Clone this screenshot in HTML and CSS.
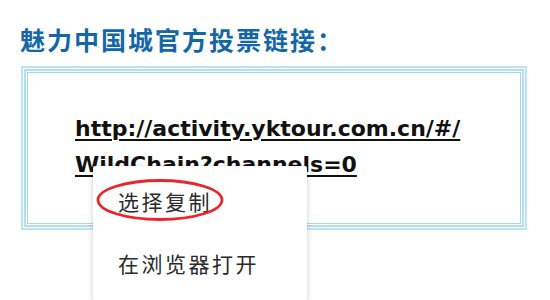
FILE: index.html
```html
<!DOCTYPE html>
<html lang="zh-CN">
<head>
<meta charset="utf-8">
<link rel="stylesheet" href="styles.css">
</head>
<body>
<div class="page">
  <h1 class="title">魅力中国城官方投票链接：</h1>
  <div class="frame">
    <div class="frame-mid">
      <div class="frame-core">
        <a class="url" href="#">http://activity.yktour.com.cn/#/<br>WildChain?channels=0</a>
      </div>
    </div>
  </div>
  <div class="menu">
    <div class="menu-item">选择复制</div>
    <div class="menu-item">在浏览器打开</div>
  </div>
  <svg class="circle" width="130" height="44" viewBox="0 0 130 44">
    <ellipse cx="64" cy="22" rx="62" ry="19.5" fill="none" stroke="#e8262b" stroke-width="2.8"/>
  </svg>
</div>
</body>
</html>
```

FILE: styles.css
```css
html, body {
  margin: 0;
  padding: 0;
  background: #ffffff;
}

.page {
  position: relative;
  width: 550px;
  height: 300px;
  overflow: hidden;
}

.title {
  margin: 0;
  padding: 26px 0 0 20px;
  font-family: "Noto Sans CJK SC", "Noto Sans", sans-serif;
  font-size: 25px;
  line-height: 26px;
  font-weight: 700;
  letter-spacing: 2px;
  color: #1467a7;
}

.frame {
  margin: 14px 0 0 21px;
  width: 506px;
  height: 164px;
  box-sizing: border-box;
  border: 2px solid #bde4f4;
  padding: 1px;
}

.frame-mid {
  height: 100%;
  box-sizing: border-box;
  border: 2px solid #b3dff2;
  padding: 1px;
}

.frame-core {
  height: 100%;
  box-sizing: border-box;
  border: 1px solid #a6d8ee;
  padding: 38px 0 0 47px;
}

.url {
  font-family: "DejaVu Sans", "Liberation Sans", sans-serif;
  font-weight: 700;
  font-size: 22px;
  line-height: 36px;
  color: #111111;
  text-decoration: underline;
  text-decoration-thickness: 2px;
  text-underline-offset: 3px;
}

.menu {
  position: absolute;
  left: 93px;
  top: 166px;
  width: 214px;
  height: 134px;
  box-sizing: border-box;
  padding-top: 4px;
  background: #ffffff;
  border-radius: 2px;
  box-shadow: 0 1px 6px rgba(0, 0, 0, 0.18), 0 0 1px rgba(0, 0, 0, 0.12);
  display: flex;
  flex-direction: column;
}

.menu-item {
  height: 62px;
  display: flex;
  align-items: center;
  padding-left: 25px;
  font-family: "Noto Sans CJK SC", "Noto Sans", sans-serif;
  font-size: 21px;
  letter-spacing: 2.5px;
  color: #2a2a2a;
}

.circle {
  position: absolute;
  left: 96px;
  top: 178px;
}
```
